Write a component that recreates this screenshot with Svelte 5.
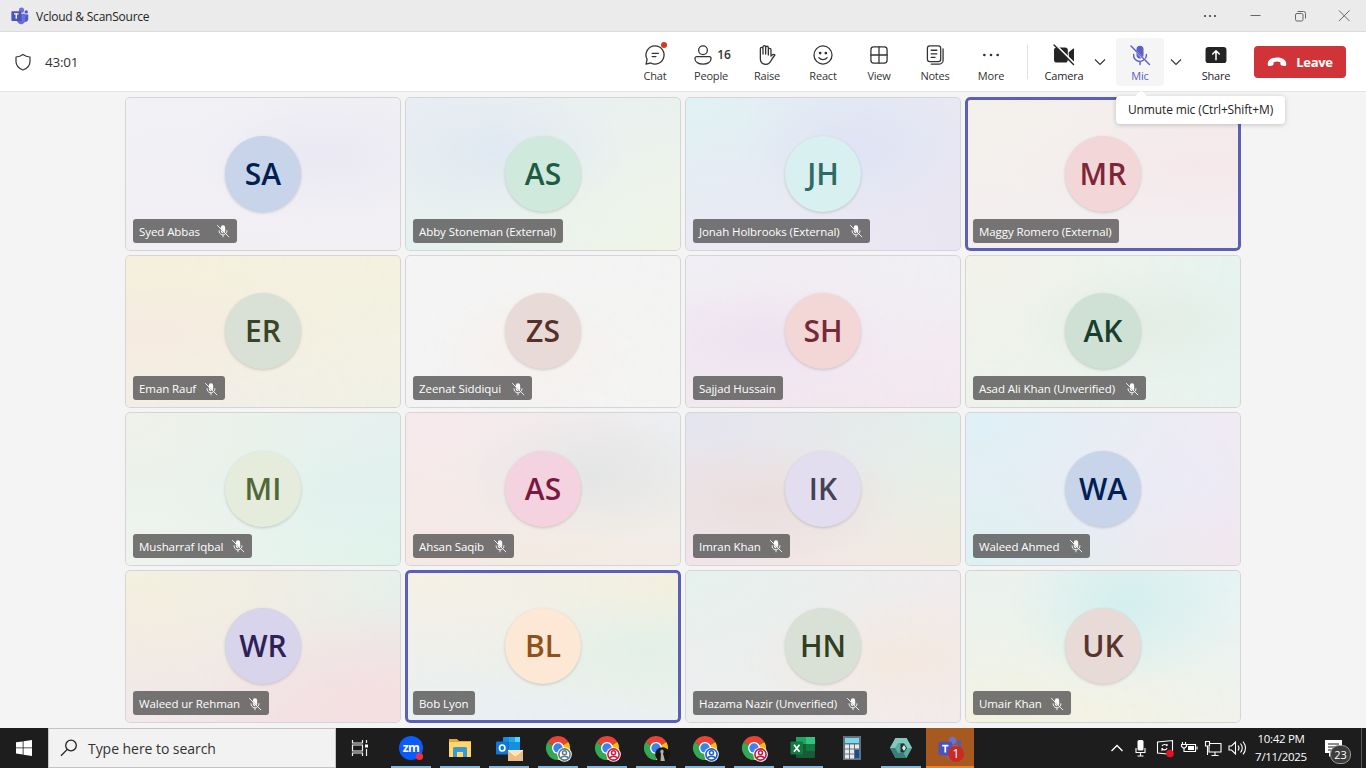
<script lang="ts">
  type Tile = {
    name: string;
    initials: string;
    width: number;
    muted?: boolean;
    speaking?: boolean;
    bg: string;
    fg: string;
    // top-left, top-right, bottom-left, bottom-right, spot, spot position
    wash: string[];
  };

  const tiles: Tile[] = [
    { name: 'Syed Abbas', initials: 'SA', width: 104, muted: true, bg: '#c7d4e9', fg: '#00204f', wash: ['#f2f1f5', '#f0eff2', '#f1eef4', '#f2f0f4', '#eae9f4', '72% 38%'] },
    { name: 'Abby Stoneman (External)', initials: 'AS', width: 157, bg: '#cfeadc', fg: '#1d5b45', wash: ['#e9edf4', '#e9f1ef', '#e3f1f0', '#f1f5e6', '#e0e9f2', '32% 35%'] },
    { name: 'Jonah Holbrooks (External)', initials: 'JH', width: 177, muted: true, bg: '#d9f0f1', fg: '#2d6b66', wash: ['#e0f2f4', '#e9e7f2', '#ede9f4', '#e9e6f2', '#dfe3f4', '62% 32%'] },
    { name: 'Maggy Romero (External)', initials: 'MR', width: 146, speaking: true, bg: '#f3d6d8', fg: '#7c2638', wash: ['#f4f0ea', '#f4eaee', '#f3edef', '#f2f0f2', '#f5e8ea', '85% 45%'] },
    { name: 'Eman Rauf', initials: 'ER', width: 92, muted: true, bg: '#d9e0d6', fg: '#3a4427', wash: ['#f5f0dc', '#f3f1df', '#f3ede6', '#f1f1e6', '#f6eae0', '10% 50%'] },
    { name: 'Zeenat Siddiqui', initials: 'ZS', width: 119, muted: true, bg: '#e8dad6', fg: '#56312a', wash: ['#f4f4f4', '#f3f3f3', '#f3f3f5', '#f4f4f2', '#f6f0ed', '45% 65%'] },
    { name: 'Sajjad Hussain', initials: 'SH', width: 88, bg: '#f3d6d6', fg: '#742a39', wash: ['#f0eff4', '#f0f0f4', '#f2e7ef', '#f4e7ef', '#eee2f1', '28% 55%'] },
    { name: 'Asad Ali Khan (Unverified)', initials: 'AK', width: 173, muted: true, bg: '#cfe0d5', fg: '#183e2e', wash: ['#f3f2e9', '#e5f3f0', '#edf2ea', '#e8f3ef', '#e3ede5', '65% 45%'] },
    { name: 'Musharraf Iqbal', initials: 'MI', width: 119, muted: true, bg: '#e5ecdb', fg: '#526737', wash: ['#f0f1ea', '#e5f0f0', '#f0f3ef', '#def3ea', '#e2f1ee', '85% 50%'] },
    { name: 'Ahsan Saqib', initials: 'AS', width: 101, muted: true, bg: '#f4d2e0', fg: '#7a1940', wash: ['#f7e9ed', '#ebeff3', '#f4e9e2', '#f2ece3', '#e4e5e5', '68% 40%'] },
    { name: 'Imran Khan', initials: 'IK', width: 97, muted: true, bg: '#e2def0', fg: '#454157', wash: ['#e4e4f0', '#e0f1ed', '#f2e4ea', '#f2ebdd', '#ebdede', '27% 58%'] },
    { name: 'Waleed Ahmed', initials: 'WA', width: 117, muted: true, bg: '#c7d4e9', fg: '#001f56', wash: ['#def1f7', '#f1eaf3', '#dcf2f3', '#f3e6ee', '#ebebf6', '75% 45%'] },
    { name: 'Waleed ur Rehman', initials: 'WR', width: 136, muted: true, bg: '#d7d4eb', fg: '#2d2155', wash: ['#f3f1df', '#e5f1ed', '#f0e8ec', '#f3e1e2', '#f4dfe1', '88% 88%'] },
    { name: 'Bob Lyon', initials: 'BL', width: 61, speaking: true, bg: '#fce8d5', fg: '#92501b', wash: ['#f5f0e4', '#f3f0dc', '#e8eff3', '#e9f0f3', '#e3f0e8', '88% 55%'] },
    { name: 'Hazama Nazir (Unverified)', initials: 'HN', width: 174, muted: true, bg: '#d9e1d6', fg: '#303e22', wash: ['#e5f1ed', '#f1ebed', '#edeef0', '#f3eaea', '#f4e9e0', '78% 58%'] },
    { name: 'Umair Khan', initials: 'UK', width: 98, muted: true, bg: '#e8dad6', fg: '#58342f', wash: ['#eaf2ee', '#e5f3f5', '#f3f2df', '#f2f2ea', '#d3efee', '58% 22%'] }
  ];

  const tools = ['Chat', 'People', 'Raise', 'React', 'View', 'Notes', 'More'];

  const apps = [
    { id: 'zoom', open: true },
    { id: 'explorer', open: true },
    { id: 'outlook', open: true },
    { id: 'chrome', open: true, badge: '#5d7886' },
    { id: 'chrome', open: true, badge: '#d3183f' },
    { id: 'chrome', open: true, photo: true },
    { id: 'chrome', open: true, badge: '#1d5fc4' },
    { id: 'chrome', open: true, badge: '#c8143c' },
    { id: 'excel', open: true },
    { id: 'calc', open: false },
    { id: 'hex', open: true },
    { id: 'teams', open: true }
  ];

  function wash([tl, tr, bl, br, spot, at]: string[]) {
    return [
      `radial-gradient(ellipse at ${at}, ${spot} 0%, transparent 50%)`,
      `radial-gradient(ellipse at 0% 0%, ${tl} 0%, transparent 75%)`,
      `radial-gradient(ellipse at 100% 0%, ${tr} 0%, transparent 75%)`,
      `radial-gradient(ellipse at 0% 100%, ${bl} 0%, transparent 75%)`,
      `linear-gradient(${br}, ${br})`
    ].join(', ');
  }
</script>

{#snippet micOff(size: number)}
  <svg width={size} height={size} viewBox="0 0 24 24" fill="none" stroke="currentColor" stroke-width="1.5" stroke-linecap="round">
    <path d="M8.3 7V6a3.7 3.7 0 0 1 7.4 0v6c0 .8-.2 1.4-.6 2L8.3 7.200Z" fill="currentColor" stroke="none" />
    <path d="M8.300 9.500V12a3.700 3.700 0 0 0 5 3.500Z" fill="currentColor" stroke="none" />
    <path d="M5.300 11.500v.5a6.500 6.500 0 0 0 10.200 5.500M18.700 11.500v.5c0 1.200-.3 2.300-.8 3.200M12 18.800V22M2.500 2.500l19.500 19.500" />
  </svg>
{/snippet}

{#snippet teamsLogo(size: number)}
  <svg width={size} height={size} viewBox="0 0 24 24">
    <circle cx="20.300" cy="6.500" r="2.300" fill="#5059c9" />
    <path d="M16 10h7v6a4 4 0 0 1-6 3.500Z" fill="#5059c9" />
    <circle cx="14" cy="4.200" r="3.400" fill="#6a72d8" />
    <path d="M8 9h11v8.500a5.500 5.500 0 0 1-11 0Z" fill="#6a72d8" />
    <path d="M8 9h6v10H8Z" fill="#4d55b5" />
    <rect x="0.500" y="5.500" width="13" height="13" rx="1.200" fill="#4b53bc" />
    <path d="M4 9.200h6M7 9.200v6.600" stroke="#fff" stroke-width="1.700" />
  </svg>
{/snippet}

{#snippet chevron()}
  <svg width="12" height="12" viewBox="0 0 12 12" fill="none" stroke="#333" stroke-width="1.1">
    <path d="M1 3.500l5 5 5-5" />
  </svg>
{/snippet}

{#snippet toolIcon(name: string)}
  <svg width="24" height="24" viewBox="0 0 24 24" fill="none" stroke="#333" stroke-width="1.35" stroke-linecap="round" stroke-linejoin="round">
    {#if name === 'Chat'}
      <path d="M12 2.500a9.500 9.500 0 1 1-4.400 17.900L2.600 21.500l1.100-4.900A9.500 9.500 0 0 1 12 2.500ZM9 10.300h6.500M9 13.700h4" />
    {:else if name === 'People'}
      <circle cx="12" cy="7" r="4.600" />
      <path d="M5.500 13.800h13a2 2 0 0 1 2 2c0 3.600-3.800 5.700-8.500 5.700s-8.500-2.100-8.500-5.700a2 2 0 0 1 2-2Z" />
    {:else if name === 'Raise'}
      <path d="M6.500 12V5.300a1.400 1.400 0 0 1 2.800 0V11V3.600a1.400 1.400 0 0 1 2.800 0V11V4.200a1.400 1.400 0 0 1 2.800 0V12V6.500a1.400 1.400 0 0 1 2.800 0v6.700l1.500-1.400c1-.9 2.200-.6 2.600.2-1 1.300-3.200 4.400-4.400 6.600-1 1.900-2.500 3.200-4.900 3.200-4 0-6-2.400-6-6Z" transform="translate(-1.500 0)" />
    {:else if name === 'React'}
      <circle cx="12" cy="12" r="9.500" />
      <path d="M7.700 14.700c2 2.900 6.600 2.900 8.600 0" />
      <circle cx="9" cy="10" r=".8" fill="#333" />
      <circle cx="15" cy="10" r=".8" fill="#333" />
    {:else if name === 'View'}
      <rect x="3.500" y="3.500" width="17" height="17" rx="3" />
      <path d="M12 3.500v17M3.500 12h17" />
    {:else if name === 'Notes'}
      <rect x="4" y="2.500" width="14" height="16.500" rx="2.500" />
      <path d="M8 7h6M8 10.800h6M8 14.600h4M20.500 5.500v12a4 4 0 0 1-4 4H8" />
    {:else if name === 'More'}
      <g fill="#333" stroke="none">
        <circle cx="5" cy="12" r="1.400" /><circle cx="12" cy="12" r="1.400" /><circle cx="19" cy="12" r="1.400" />
      </g>
    {:else if name === 'Camera'}
      <g fill="#242424" stroke="none">
        <rect x="1.500" y="4" width="14.500" height="16" rx="3" />
        <path d="M17 9l4.300-3.500c.7-.5 1.200-.2 1.200.5v12c0 .7-.5 1-1.200.5L17 15Z" />
      </g>
      <path d="M3 1l20.500 20.500" stroke="#fff" stroke-width="2" />
      <path d="M1.500 1.500l20.500 20.500" stroke="#242424" stroke-width="1.500" />
    {:else if name === 'Share'}
      <rect x="1" y="3.500" width="22" height="17" rx="3" fill="#242424" stroke="none" />
      <path d="M12 17V8M8.500 11L12 7.500l3.500 3.500" stroke="#fff" stroke-width="1.600" />
    {/if}
  </svg>
{/snippet}

{#snippet appIcon(app: { id: string; badge?: string; photo?: boolean })}
  <svg width="28" height="28" viewBox="0 0 28 28">
    {#if app.id === 'zoom'}
      <circle cx="14" cy="14" r="12" fill="#0b5cff" />
      <text x="14" y="18" text-anchor="middle" class="zm">zm</text>
      <circle cx="22.500" cy="22.500" r="3.600" fill="#ec2f45" />
    {:else if app.id === 'explorer'}
      <path d="M3 5h8l2 2h12v5H3Z" fill="#e8a92a" />
      <path d="M3 8h22v15H3Z" fill="#ffd869" />
      <path d="M7 23v-8.500q0-1.500 1.500-1.500h11q1.500 0 1.500 1.500V23h-4v-5h-6v5Z" fill="#3b98d6" />
    {:else if app.id === 'outlook'}
      <rect x="8" y="3" width="17" height="15" rx="1" fill="#1490df" />
      <path d="M14 3h6v5h-6Z" fill="#28a8ea" />
      <path d="M20 3h5v5h-5Z" fill="#50d9ff" />
      <path d="M8 8h6v10H8Z" fill="#0364b8" />
      <rect x="1" y="7.500" width="12.500" height="13" rx="1" fill="#0f78d4" />
      <ellipse cx="7.200" cy="14" rx="2.700" ry="3" fill="none" stroke="#fff" stroke-width="1.700" />
      <rect x="13" y="16" width="15" height="11" fill="#e9bd83" />
      <path d="M13 16l7.500 6 7.500-6" fill="#ffe3b5" stroke="#fff" stroke-width=".8" />
    {:else if app.id === 'chrome'}
      <path d="M14 14L3.600 8A12 12 0 0 1 24.400 8Z" fill="#ea4335" />
      <path d="M14 14L24.400 8A12 12 0 0 1 14 26Z" fill="#fbbc05" />
      <path d="M14 14v12A12 12 0 0 1 3.600 8Z" fill="#34a853" />
      <path d="M3.600 8h20.800L14 12Z" fill="#ea4335" />
      <circle cx="14" cy="14" r="6" fill="#fff" />
      <circle cx="14" cy="14" r="4.700" fill="#3b82ee" />
      {#if app.photo}
        <circle cx="20.500" cy="20.500" r="7.300" fill="#151515" />
        <path d="M20 15.500c2 0 2 3 1 4l2 7.500h-4.500l.5-7.500c-1-1-1-4 1-4Z" fill="#b6afa9" />
      {:else}
        <circle cx="20.500" cy="20.500" r="7.300" fill="#fff" />
        <circle cx="20.500" cy="20.500" r="5.600" fill="#fff" stroke={app.badge} stroke-width="1.600" />
        <circle cx="20.500" cy="18.800" r="2" fill="none" stroke={app.badge} stroke-width="1.500" />
        <path d="M16.700 24c1.500-2.500 6-2.500 7.600 0" fill="none" stroke={app.badge} stroke-width="1.500" />
      {/if}
    {:else if app.id === 'excel'}
      <rect x="7" y="3" width="19" height="21" rx="1.500" fill="#185c37" />
      <path d="M7 3h10v7H7Z" fill="#21a366" />
      <path d="M17 3h9v7h-9Z" fill="#33c481" />
      <path d="M17 10h9v7h-9Z" fill="#107c41" />
      <rect x="1.500" y="7.500" width="12.500" height="13" rx="1" fill="#107c41" />
      <path d="M5 10.700l5.500 7M10.500 10.700l-5.500 7" stroke="#fff" stroke-width="1.700" />
    {:else if app.id === 'calc'}
      <rect x="5" y="2" width="18" height="24" fill="#66717a" />
      <rect x="7" y="4" width="14" height="5" fill="#79d8ed" />
      <g fill="#e8ebee">
        {#each [10.5, 15.500, 20.500] as y}
          {#each [7, 12, 17] as x}
            <rect {x} {y} width="4" height="4" />
          {/each}
        {/each}
      </g>
      <rect x="17" y="15.500" width="4" height="9" fill="#154f91" />
    {:else if app.id === 'hex'}
      <path d="M8.500 4h11L25 14l-5.500 10h-11L3 14Z" fill="#62aaa0" />
      <path d="M8.500 4h11L25 14h-5l-3-5h-6l-3 5H3Z" fill="#82c8bd" />
      <path d="M3 14l5.500 10h11l-3-5h-5.500l-3-5Z" fill="#377f79" />
      <path d="M13.500 9.500h3.500l3 4.500-3 4.500h-3.500Z" fill="#1d3437" />
      <path d="M17 11l2 3-2 3-2-3Z" fill="#d9f2ec" />
    {/if}
  </svg>
{/snippet}

<div class="desktop">
  <header class="titlebar">
    <span class="app-logo">{@render teamsLogo(18)}</span>
    <span class="title">Vcloud &amp; ScanSource</span>
    <div class="window-actions">
      <svg class="more" width="14" height="4" viewBox="0 0 14 4" fill="#444"><circle cx="2" cy="2" r="1.100" /><circle cx="7" cy="2" r="1.100" /><circle cx="12" cy="2" r="1.100" /></svg>
      <svg width="44" height="31" fill="none" stroke="#666"><path d="M16.500 15.500h10" /></svg>
      <svg width="44" height="31" fill="none" stroke="#666"><rect x="17.500" y="13.500" width="7.500" height="7.500" rx="1.500" /><path d="M19.500 11.500h6q2 0 2 2v5" /></svg>
      <svg width="44" height="31" fill="none" stroke="#666"><path d="M17 10.500l10.500 10.500M27.500 10.500L17 21" /></svg>
    </div>
  </header>

  <div class="toolbar">
    <svg class="shield" width="18" height="18" viewBox="0 0 18 18" fill="none" stroke="#333" stroke-width="1.200" stroke-linejoin="round">
      <path d="M9 1.500q3 2.300 7 2.500v4.500c0 4-2.500 6.800-7 8.500-4.500-1.700-7-4.500-7-8.500V4q4-.2 7-2.500Z" />
    </svg>
    <span class="timer">43:01</span>

    <div class="tools">
      {#each tools as tool}
        <button class="tool">
          <span class="tool-icon">
            {@render toolIcon(tool)}
            {#if tool === 'People'}<b>16</b>{/if}
            {#if tool === 'Chat'}<i class="dot"></i>{/if}
          </span>
          <span>{tool}</span>
        </button>
      {/each}
    </div>
    <div class="divider"></div>
    <div class="devices">
      <button class="tool device">
        <span class="tool-icon">{@render toolIcon('Camera')}</span>
        <span>Camera</span>
      </button>
      <button class="expand">{@render chevron()}</button>
      <button class="tool device active">
        <span class="tool-icon">{@render micOff(24)}</span>
        <span>Mic</span>
      </button>
      <button class="expand">{@render chevron()}</button>
      <button class="tool device">
        <span class="tool-icon">{@render toolIcon('Share')}</span>
        <span>Share</span>
      </button>
    </div>
    <button class="leave">
      <svg width="20" height="10" viewBox="0 0 20 10" fill="#fff"><path d="M10 .5c5.500 0 9.300 2.500 9.300 6.500 0 1.600-.8 2.300-2 2l-2.600-.6c-.9-.2-1.300-.8-1.300-1.600V5.200a10 10 0 0 0-6.800 0v1.600c0 .8-.4 1.400-1.300 1.600L2.700 9c-1.200.3-2-.4-2-2C.7 3 4.500.5 10 .5Z" /></svg>
      Leave
    </button>
    <div class="tooltip">Unmute mic (Ctrl+Shift+M)</div>
  </div>

  <main class="stage">
    {#each tiles as tile}
      <div class="tile" class:speaking={tile.speaking} style:background={wash(tile.wash)}>
        <div class="avatar" style:background={tile.bg} style:color={tile.fg}>{tile.initials}</div>
        <div class="name" style:width={tile.muted ? `${tile.width}px` : null}>
          <span>{tile.name}</span>
          {#if tile.muted}{@render micOff(14)}{/if}
        </div>
      </div>
    {/each}
  </main>

  <footer class="taskbar">
    <button class="start">
      <svg width="16" height="16" viewBox="0 0 16 16" fill="#fff"><path d="M0 2.300l6.700-.9v6.100H0ZM7.500 1.300L16 0v7.500H7.500ZM0 8.300h6.700v6.200L0 13.600ZM7.500 8.300H16V16l-8.500-1.300Z" /></svg>
    </button>
    <div class="search">
      <svg width="18" height="18" viewBox="0 0 18 18" fill="none" stroke="#222" stroke-width="1.300"><circle cx="11" cy="6.500" r="5.300" /><path d="M7.300 10.400L1 16.700" /></svg>
      Type here to search
    </div>
    <button class="start">
      <svg width="18" height="18" viewBox="0 0 18 18" fill="none" stroke="#eee" stroke-width="1.200"><path d="M1.500 1v3h10V1M1.500 17v-3h10v3M1.500 6h10v6h-10ZM15.500 1v3M15.500 10v7" /><path d="M14 5.500h3v3h-3Z" fill="#fff" stroke="none" /></svg>
    </button>
    <div class="apps">
      {#each apps as app}
        <div class="app {app.id}" class:open={app.open}>
          {#if app.id === 'teams'}
            {@render teamsLogo(25)}
            <span class="count">1</span>
          {:else}
            {@render appIcon(app)}
          {/if}
        </div>
      {/each}
    </div>
    <div class="tray">
      <svg viewBox="0 0 24 24"><path d="M6.500 15l5.500-5.500 5.500 5.500" stroke-width="1.400" /></svg>
      <svg viewBox="0 0 24 24"><rect x="8.500" y="4" width="6" height="10.500" rx="1.500" fill="#fff" stroke="none" /><path d="M7 12v4.500h9V12M11.500 16.500V20M8.500 20h6" /></svg>
      <svg viewBox="0 0 24 24"><path d="M4.500 6l15-1.500v14l-15-1.500ZM9 10c1-2 4-2 5 0V8M14 12c-1 2.500-4 2.500-5 0v3" /><circle cx="17" cy="17.500" r="3.800" fill="#e81123" stroke="none" /></svg>
      <svg viewBox="0 0 24 24"><path d="M9.500 8.500h9v7h-9M20 10.500v3M5.500 6v2.500M8.500 6v2.500M4.500 8.500h5v2L7 12.500 4.500 10.500ZM7 12.500v3h2.500" /><rect x="11" y="10" width="6" height="4" fill="#fff" stroke="none" /></svg>
      <svg viewBox="0 0 24 24"><path d="M9 7.500h11v8.500H8V11M14 16v3M10.500 19.500h7M4.500 5.500h4v4.500h-4ZM6.500 10v9" /></svg>
      <svg viewBox="0 0 24 24"><path d="M4 10h2.500L10.500 6v12L6.500 14H4ZM13 9.500q2 2.500 0 5M15.500 7.500q3.500 4.500 0 9M18 5.500q5 6.500 0 13" /></svg>
      <div class="clock"><span>10:42 PM</span><span>7/11/2025</span></div>
      <div class="notifications">
        <svg viewBox="0 0 24 24"><path d="M4 4h17v13h-9l-4 4v-4H4Z" fill="#fff" stroke="none" /><path d="M7 8h11M7 11h11M7 14h7" stroke="#1d1d1d" /></svg>
        <span>23</span>
      </div>
      <div class="show-desktop"></div>
    </div>
  </footer>
</div>

<style>
  :global(body) {
    margin: 0;
    overflow: hidden;
  }

  .desktop {
    display: flex;
    flex-direction: column;
    width: 1366px;
    height: 768px;
    background: #f4f4f4;
    color: #333;
    font-family: 'Open Sans', 'Noto Sans', sans-serif;
    font-size: 12px;
  }

  svg {
    display: block;
    flex-shrink: 0;
  }

  button {
    padding: 0;
    border: none;
    background: none;
    color: inherit;
    font: inherit;
  }

  .titlebar {
    box-sizing: border-box;
    height: 32px;
    display: flex;
    align-items: center;
    padding-left: 11px;
    background: #ebebeb;
    border-bottom: 1px solid #dcdcdc;
  }

  .title {
    margin-left: 7px;
    padding-top: 2px;
    color: #242424;
    letter-spacing: -0.23px;
  }

  .window-actions {
    display: flex;
    align-items: center;
    margin-left: auto;
  }

  .window-actions .more {
    margin-right: 17px;
  }

  .toolbar {
    position: relative;
    box-sizing: border-box;
    height: 60px;
    display: flex;
    align-items: center;
    padding: 0 20px 0 14px;
    background: #fff;
    border-bottom: 1px solid #e5e5e5;
  }

  .timer {
    margin-left: 13px;
    font-size: 13.5px;
    letter-spacing: -0.25px;
  }

  .tools {
    display: flex;
    margin-left: auto;
  }

  .tool {
    width: 56px;
    height: 48px;
    display: flex;
    flex-direction: column;
    align-items: center;
    gap: 1px;
    font-size: 11px;
    line-height: 16px;
    letter-spacing: -0.2px;
  }

  .tool-icon {
    position: relative;
    height: 24px;
    margin-top: 5px;
    display: flex;
    align-items: center;
    gap: 2px;
  }

  .tool-icon b {
    font-size: 12px;
    font-weight: 600;
  }

  .dot {
    position: absolute;
    top: -1px;
    right: 0;
    width: 6px;
    height: 6px;
    border-radius: 50%;
    background: #d13a1f;
  }

  .divider {
    width: 1px;
    height: 34px;
    margin: 0 12px 0 8px;
    background: #e0e0e0;
  }

  .devices {
    display: flex;
    align-items: center;
  }

  .device {
    width: 48px;
    border-radius: 3px;
    color: #242424;
  }

  .active {
    background: #f5f5f5;
    color: #5b5fc7;
  }

  .expand {
    width: 24px;
    display: flex;
    justify-content: center;
    margin-right: 4px;
  }

  .tool-icon :global(svg) {
    transform: scale(0.95);
  }

  .leave {
    width: 92px;
    height: 32px;
    display: flex;
    align-items: center;
    justify-content: center;
    gap: 9px;
    margin-left: 14px;
    border-radius: 4px;
    background: #d13438;
    color: #fff;
    font-size: 13px;
    font-weight: 700;
    letter-spacing: -0.3px;
  }

  .tooltip {
    position: absolute;
    z-index: 2;
    top: 64px;
    left: 1116px;
    width: 169px;
    height: 28px;
    border-radius: 4px;
    background: #fff;
    box-shadow: 0 1px 5px rgba(0, 0, 0, 0.2);
    color: #242424;
    text-align: center;
    line-height: 27px;
    letter-spacing: -0.13px;
    white-space: nowrap;
  }

  .tooltip::before {
    content: '';
    position: absolute;
    top: -4px;
    left: 21px;
    width: 8px;
    height: 8px;
    background: #fff;
    transform: rotate(45deg);
  }

  .stage {
    box-sizing: border-box;
    height: 636px;
    display: grid;
    grid-template-columns: repeat(4, 276px);
    grid-template-rows: repeat(4, 153.5px);
    gap: 4px;
    justify-content: center;
    padding-top: 5px;
  }

  .tile {
    position: relative;
    display: grid;
    place-items: center;
    border-radius: 5px;
    box-shadow: inset 0 0 0 1px #d5d5d5;
  }

  .speaking {
    box-shadow: inset 0 0 0 3px #5b5fb7;
  }

  .avatar {
    width: 76px;
    height: 76px;
    border-radius: 50%;
    box-shadow: 0 1px 3px rgba(0, 0, 0, 0.17);
    font-size: 30px;
    font-weight: 600;
    line-height: 76px;
    text-align: center;
  }

  .name {
    position: absolute;
    left: 8px;
    bottom: 8px;
    box-sizing: border-box;
    height: 24px;
    display: flex;
    align-items: center;
    justify-content: space-between;
    padding: 1px 7px 0 6px;
    border-radius: 3px;
    background: rgba(85, 84, 84, 0.8);
    color: #fff;
    font-size: 11.5px;
    letter-spacing: -0.08px;
    white-space: nowrap;
  }

  .taskbar {
    height: 40px;
    display: flex;
    background: #1d1d1d;
    color: #fff;
  }

  .start {
    width: 48px;
    display: grid;
    place-items: center;
  }

  .search {
    box-sizing: border-box;
    width: 288px;
    display: flex;
    align-items: center;
    gap: 10px;
    padding-left: 11px;
    border: 1px solid #c4c4c4;
    background: #f2f2f2;
    color: #333;
    font-size: 14px;
    letter-spacing: -0.05px;
  }

  .apps {
    display: flex;
    gap: 1px;
    margin-left: 3px;
  }

  .app {
    position: relative;
    width: 48px;
    display: grid;
    place-items: center;
  }

  .app.open::after {
    content: '';
    position: absolute;
    bottom: 0;
    left: 4px;
    width: 40px;
    height: 2px;
    background: #76b9ed;
  }

  .app.teams {
    background: #a75a20;
  }

  .app.teams::after {
    left: 0;
    width: 48px;
    background: #f77f16;
  }

  .count {
    position: absolute;
    left: 22px;
    top: 18px;
    width: 16px;
    height: 16px;
    border-radius: 50%;
    background: #c92a23;
    font-size: 12px;
    line-height: 16px;
    text-align: center;
  }

  .zm {
    fill: #fff;
    font-size: 12px;
    font-weight: 700;
    letter-spacing: -0.5px;
  }

  .tray {
    display: flex;
    align-items: center;
    margin-left: auto;
  }

  .tray svg {
    width: 24px;
    height: 24px;
    fill: none;
    stroke: #fff;
    stroke-width: 1.1;
  }

  .clock {
    width: 64px;
    display: flex;
    flex-direction: column;
    align-items: center;
    font-size: 11.5px;
    line-height: 18px;
    letter-spacing: -0.3px;
    white-space: nowrap;
  }

  .notifications {
    position: relative;
    width: 40px;
    display: flex;
    justify-content: center;
  }

  .notifications span {
    position: absolute;
    left: 17px;
    top: 9px;
    width: 19px;
    height: 17px;
    border: 1px solid #999;
    border-radius: 9px;
    background: #3c3c3c;
    font-size: 11px;
    line-height: 17px;
    text-align: center;
  }

  .show-desktop {
    width: 4px;
    height: 40px;
    margin-left: 8px;
    border-left: 1px solid #555;
  }
</style>
